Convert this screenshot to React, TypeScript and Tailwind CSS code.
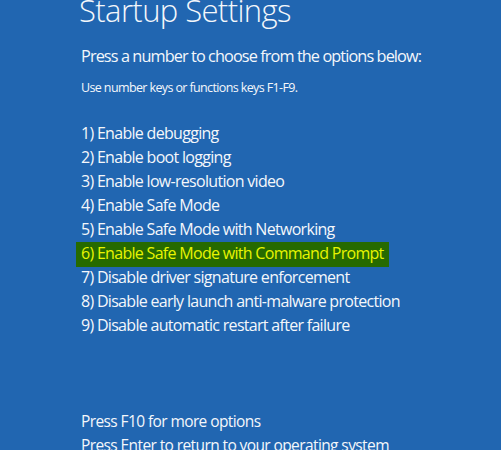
import React from "react";

const items = [
  "1) Enable debugging",
  "2) Enable boot logging",
  "3) Enable low-resolution video",
  "4) Enable Safe Mode",
  "5) Enable Safe Mode with Networking",
  "6) Enable Safe Mode with Command Prompt",
  "7) Disable driver signature enforcement",
  "8) Disable early launch anti-malware protection",
  "9) Disable automatic restart after failure",
];

export default function App() {
  return (
    <div className="w-[501px] h-[450px] overflow-hidden bg-[#2166b1] text-[#f4f7fb] font-['Open_Sans',sans-serif]">
      <div className="pl-[81px]">
        <h1 className="ml-[-2px] mt-[-5.5px] text-[31px] leading-[31px] font-light tracking-[-0.6px]">Startup Settings</h1>
        <p className="mt-[18px] text-[16.3px] leading-[24px] tracking-[-0.91px]">Press a number to choose from the options below:</p>
        <p className="mt-[11.5px] text-[12.5px] leading-[18px] tracking-[-0.62px]">Use number keys or functions keys F1-F9.</p>
        <ul className="mt-[24px] flex flex-col text-[16px] leading-[24px] tracking-[-0.7px]">
          {items.map((t, i) =>
            i === 5 ? (
              <li key={t} className="w-fit ml-[-5px] pl-[5px] pr-[5px] mt-[1px] mb-[-2px] h-[25px] leading-[22px] bg-[#266a00] text-[#e8f500]">
                {t}
              </li>
            ) : (
              <li key={t} className="h-[24px]">{t}</li>
            )
          )}
        </ul>
        <div className="mt-[72px] text-[15.5px] leading-[24px] tracking-[-0.6px]">
          <p>Press F10 for more options</p>
          <p>Press Enter to return to your operating system</p>
        </div>
      </div>
    </div>
  );
}
